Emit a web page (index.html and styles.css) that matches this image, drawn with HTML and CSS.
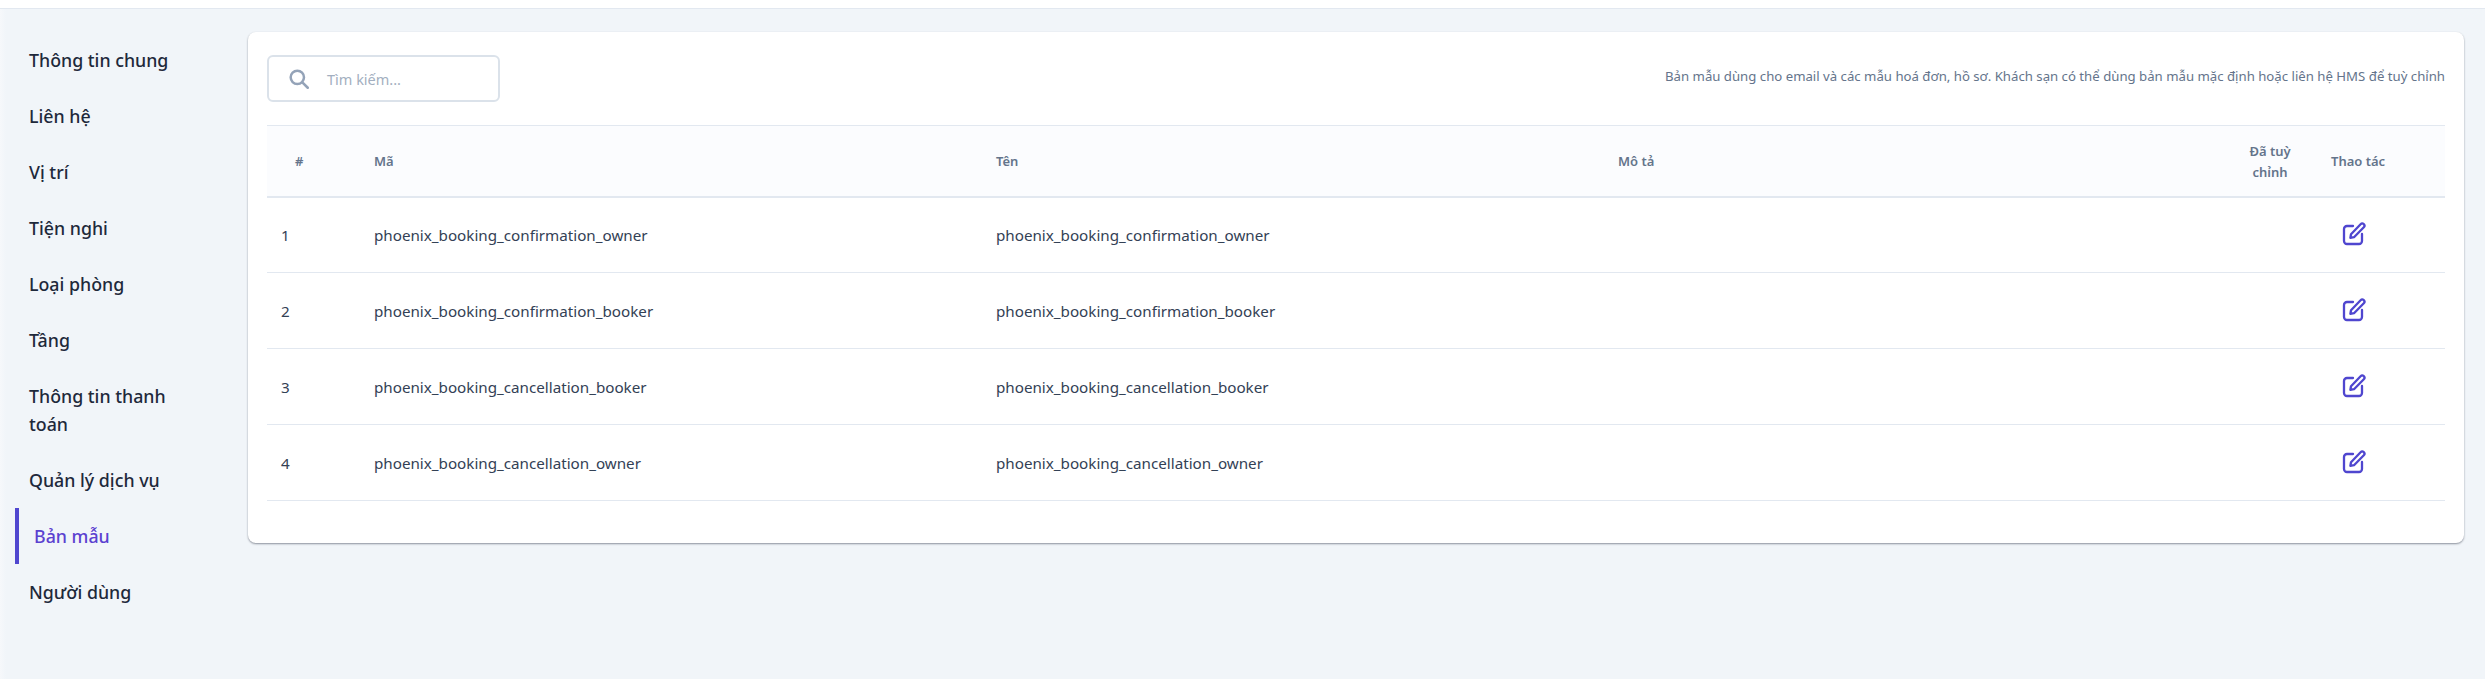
FILE: index.html
```html
<!DOCTYPE html>
<html lang="vi">
<head>
<meta charset="utf-8">
<title>Bản mẫu</title>
<link rel="stylesheet" href="styles.css">
</head>
<body>
<svg class="defs" aria-hidden="true">
  <symbol id="edit" viewBox="0 0 24 24">
    <path d="M11 4H5a3 3 0 0 0-3 3v12a3 3 0 0 0 3 3h12a3 3 0 0 0 3-3v-7"/>
    <path d="M18.6 2.2a2.2 2.2 0 0 1 3.2 3.1L12 15.2l-3.6.6.6-3.6z"/>
  </symbol>
</svg>
<div class="topbar"></div>
<div class="layout">
  <nav class="sidebar">
    <a class="nav-item">Thông tin chung</a>
    <a class="nav-item">Liên hệ</a>
    <a class="nav-item">Vị trí</a>
    <a class="nav-item">Tiện nghi</a>
    <a class="nav-item">Loại phòng</a>
    <a class="nav-item">Tầng</a>
    <a class="nav-item">Thông tin thanh toán</a>
    <a class="nav-item">Quản lý dịch vụ</a>
    <a class="nav-item active">Bản mẫu</a>
    <a class="nav-item">Người dùng</a>
  </nav>
  <main class="card">
    <div class="toolbar">
      <div class="search">
        <svg class="search-icon" viewBox="0 0 24 24" fill="none" stroke="currentColor" stroke-width="3" stroke-linecap="round"><circle cx="10" cy="10" r="8"/><path d="M16 16l6.5 6.5"/></svg>
        <span class="placeholder">Tìm kiếm...</span>
      </div>
      <p class="note">Bản mẫu dùng cho email và các mẫu hoá đơn, hồ sơ. Khách sạn có thể dùng bản mẫu mặc định hoặc liên hệ HMS để tuỳ chỉnh</p>
    </div>
    <table class="table">
      <colgroup>
        <col class="c-num"><col class="c-code"><col class="c-name"><col class="c-desc"><col class="c-custom"><col class="c-action">
      </colgroup>
      <thead>
        <tr><th class="th-num">#</th><th>Mã</th><th>Tên</th><th>Mô tả</th><th class="center">Đã tuỳ chỉnh</th><th class="th-action">Thao tác</th></tr>
      </thead>
      <tbody>
        <tr><td>1</td><td>phoenix_booking_confirmation_owner</td><td>phoenix_booking_confirmation_owner</td><td></td><td></td><td class="action"><svg class="edit"><use href="#edit"/></svg></td></tr>
        <tr><td>2</td><td>phoenix_booking_confirmation_booker</td><td>phoenix_booking_confirmation_booker</td><td></td><td></td><td class="action"><svg class="edit"><use href="#edit"/></svg></td></tr>
        <tr><td>3</td><td>phoenix_booking_cancellation_booker</td><td>phoenix_booking_cancellation_booker</td><td></td><td></td><td class="action"><svg class="edit"><use href="#edit"/></svg></td></tr>
        <tr><td>4</td><td>phoenix_booking_cancellation_owner</td><td>phoenix_booking_cancellation_owner</td><td></td><td></td><td class="action"><svg class="edit"><use href="#edit"/></svg></td></tr>
      </tbody>
    </table>
  </main>
</div>
</body>
</html>
```
FILE: styles.css
```css
* { box-sizing: border-box; }
html, body { height: 100%; }
body {
  margin: 0;
  background: #f1f5f9;
  font-family: "Noto Sans", "Open Sans", sans-serif;
  color: #1e293b;
  overflow: hidden;
}
.defs { display: none; }
.topbar {
  height: 9px;
  background: #fff;
  border-bottom: 1px solid #e2e8f0;
}
.layout {
  display: flex;
  align-items: flex-start;
  padding: 23px 21px 0 15px;
  background: linear-gradient(to right, #f6f8fb 0, #f1f5f9 6px);
  height: 670px;
}
.sidebar {
  width: 233px;
  flex: none;
  display: flex;
  flex-direction: column;
}
.nav-item {
  display: flex;
  align-items: center;
  min-height: 56px;
  padding: 14px 0 14px 14px;
  width: 170px;
  font-size: 17.8px;
  line-height: 28px;
  font-weight: 500;
  color: #1e293b;
}
.nav-item.active {
  padding-left: 15px;
  border-left: 4px solid #4f46cf;
  color: #5b41d0;
}
.card {
  flex: 1;
  height: 511px;
  background: #fff;
  border-radius: 8px;
  padding: 23px 19px 0;
  box-shadow: 0 1px 2px rgba(15, 23, 42, 0.45);
}
.toolbar {
  display: flex;
  justify-content: space-between;
  align-items: center;
  height: 47px;
  margin-bottom: 23px;
}
.search {
  width: 233px;
  height: 47px;
  display: flex;
  align-items: center;
  gap: 18px;
  padding-left: 20px;
  border: 2px solid #dbe2ea;
  border-radius: 6px;
  color: #94a3b8;
}
.search-icon { width: 20px; height: 20px; flex: none; }
.placeholder { font-size: 14.5px; color: #a3afc0; }
.note {
  margin: 0;
  font-size: 13.2px;
  color: #64748b;
  position: relative;
  top: -3px;
}
.table {
  width: 2178px;
  border-collapse: collapse;
  table-layout: fixed;
}
.c-num { width: 93px; }
.c-code, .c-name { width: 622px; }
.c-desc { width: 626px; }
.c-custom { width: 80px; }
.c-action { width: 135px; }
th {
  height: 71px;
  padding: 2px 14px 0;
  background: #fbfcfe;
  border-top: 1px solid #e2e8f0;
  border-bottom: 2px solid #e2e8f0;
  font-size: 13px;
  line-height: 21px;
  font-weight: 600;
  text-align: left;
  color: #64748b;
}
th.th-num { padding-left: 28px; }
th.center { text-align: center; }
th.th-action { padding-left: 21px; padding-right: 0; }
td {
  height: 76px;
  padding: 1px 14px 0;
  border-bottom: 1px solid #e2e8f0;
  font-size: 15.2px;
  color: #334155;
}
.action { color: #4f46cf; padding: 0 14px 2px 32px; }
.edit {
  width: 24px;
  height: 24px;
  display: block;
  fill: none;
  stroke: currentColor;
  stroke-width: 2.3;
  stroke-linecap: round;
  stroke-linejoin: round;
}
```
